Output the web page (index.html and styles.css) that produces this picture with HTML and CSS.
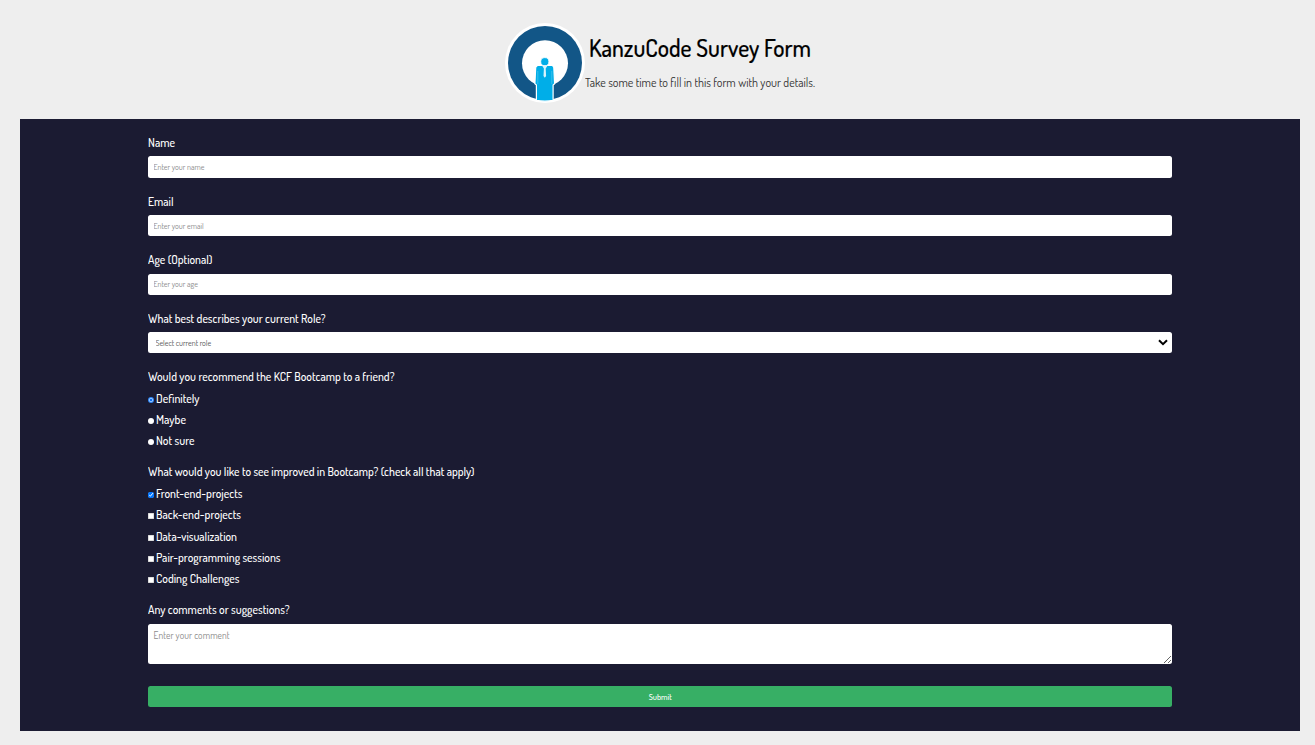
FILE: index.html
```html
<!DOCTYPE html>
<html lang="en">
<head>
<meta charset="utf-8">
<title>KanzuCode Survey Form</title>
<link rel="stylesheet" href="styles.css">
</head>
<body>
<header class="header">
  <svg class="logo" viewBox="0 0 80 80">
    <circle cx="40" cy="40" r="40" fill="#fff"/>
    <circle cx="40" cy="40" r="37" fill="#125687"/>
    <circle cx="40" cy="40.3" r="23" fill="#fff"/>
    <path d="M32.5 42.4h15l1.3 2 .8 16.3-1.5 1.3v15.4Q40 79 31.4 77.4V62l-1.5-1.3.8-16.3z" fill="#00aee8" stroke="#fff" stroke-width="1.2"/>
    <circle cx="39.8" cy="38.7" r="4.1" fill="#00aee8" stroke="#fff" stroke-width=".9"/>
    <path d="M36.8 42.3h6l-2.1 3.2.4 7.5-1.3 1.8-1.3-1.8.4-7.5z" fill="#d9f3fc"/>
    <path d="M32.8 48v13M46.8 48v13" stroke="#72d0ef" stroke-width=".5"/>
  </svg>
  <div class="titles">
    <h1 class="title"><span class="fit" data-width="222">KanzuCode Survey Form</span></h1>
    <p class="intro"><span class="fit" data-width="230">Take some time to fill in this form with your details.</span></p>
  </div>
</header>
<form class="survey">
  <div class="group">
    <label class="question" for="name"><span class="fit" data-width="27">Name</span></label>
    <input class="field" id="name" type="text" placeholder="Enter your name">
  </div>
  <div class="group">
    <label class="question" for="email"><span class="fit" data-width="25.5">Email</span></label>
    <input class="field" id="email" type="email" placeholder="Enter your email">
  </div>
  <div class="group">
    <label class="question" for="age"><span class="fit" data-width="64.5">Age (Optional)</span></label>
    <input class="field" id="age" type="text" placeholder="Enter your age">
  </div>
  <div class="group">
    <label class="question" for="role"><span class="fit" data-width="177.5">What best describes your current Role?</span></label>
    <div class="select-wrap">
      <select class="field select" id="role"><option>Select current role</option></select>
      <svg class="chevron" viewBox="0 0 10 7"><path d="M1 1.2l4 4 4-4" fill="none" stroke="#000" stroke-width="2"/></svg>
    </div>
  </div>
  <div class="choices">
    <p class="question"><span class="fit" data-width="246.5">Would you recommend the KCF Bootcamp to a friend?</span></p>
    <label class="option"><input class="tick round" type="radio" name="rec" checked><span class="fit" data-width="43.5">Definitely</span></label>
    <label class="option"><input class="tick round" type="radio" name="rec"><span class="fit" data-width="30">Maybe</span></label>
    <label class="option"><input class="tick round" type="radio" name="rec"><span class="fit" data-width="38.5">Not sure</span></label>
  </div>
  <div class="choices">
    <p class="question"><span class="fit" data-width="326.5">What would you like to see improved in Bootcamp? (check all that apply)</span></p>
    <label class="option"><input class="tick" type="checkbox" checked><span class="fit" data-width="86.5">Front-end-projects</span></label>
    <label class="option"><input class="tick square" type="checkbox"><span class="fit" data-width="85">Back-end-projects</span></label>
    <label class="option"><input class="tick square" type="checkbox"><span class="fit" data-width="81">Data-visualization</span></label>
    <label class="option"><input class="tick square" type="checkbox"><span class="fit" data-width="124.5">Pair-programming sessions</span></label>
    <label class="option"><input class="tick square" type="checkbox"><span class="fit" data-width="83.5">Coding Challenges</span></label>
  </div>
  <label class="question" for="comment"><span class="fit" data-width="141.5">Any comments or suggestions?</span></label>
  <textarea class="comment" id="comment" placeholder="Enter your comment"></textarea>
  <button class="submit" type="button"><span class="fit" data-width="23">Submit</span></button>
</form>
<script src="fit.js"></script>
</body>
</html>
```
FILE: styles.css
```css
* { box-sizing: border-box; }

body {
  margin: 0;
  background: #eee;
  font-family: Dosis, Roboto, sans-serif;
  font-size: 12px;
}

.header {
  display: flex;
  height: 119px;
  padding: 23px 0 0 505px;
}

.logo { width: 80px; height: 80px; }

.titles { width: 240px; }

.title {
  margin: 8px 0 0 4px;
  font-size: 25.6px;
  line-height: 32px;
  font-weight: 500;
  color: #000;
  -webkit-text-stroke: 0.2px #000;
}

.intro {
  margin: 12px 0 0;
  line-height: 16px;
  font-weight: 400;
  color: #333;
}

.fit {
  display: inline-block;
  white-space: nowrap;
  transform-origin: left center;
}

.survey {
  width: 1280px;
  height: 612px;
  margin-left: 20px;
  padding: 16px 128px 0;
  background: #1b1b32;
  color: #fff;
  font-weight: 500;
}

.group { height: 58.6px; }

.question {
  display: block;
  height: 16px;
  margin: 0;
  line-height: 16px;
}

.field {
  display: block;
  width: 100%;
  height: 21.3px;
  margin: 5.4px 0 0;
  padding: 0 5.5px 0;
  border: 0;
  border-radius: 2.5px;
  background: #fff;
  color: #777;
  font: 400 8px Dosis, Roboto, sans-serif;
  letter-spacing: 0;
}

.field::placeholder,
.comment::placeholder { color: #8a8a8a; }

.select-wrap { position: relative; }

.select {
  appearance: none;
  padding-left: 7.5px;
  color: #555;
}

.chevron {
  position: absolute;
  top: 7px;
  right: 4px;
  width: 10px;
  height: 7px;
}

.choices {
  margin-bottom: 12px;
}

.choices .question { margin-bottom: 2.7px; }

.choices + .choices .question { margin-bottom: 3.4px; }

.option {
  display: flex;
  align-items: center;
  height: 21.3px;
  line-height: 16px;
}

.tick {
  width: 6px;
  height: 6px;
  margin: 2px 2.4px 0 0;
}

.square,
.round {
  appearance: none;
  background: #fff;
  border: 0;
}

.square { box-shadow: inset 0 0 0 0.5px #bbb; }

.round { border-radius: 50%; }

.round:checked {
  background: radial-gradient(circle, #0d6ff0 0 1px, #8fc3ff 1.6px, #2b83f5 2.6px);
}

.comment {
  display: block;
  width: 100%;
  height: 40px;
  margin: 6px 0 22px;
  padding: 5.5px 5.5px;
  border: 0;
  border-radius: 2.5px;
  font: 400 9.5px/12px Dosis, Roboto, sans-serif;
  letter-spacing: 0.08px;
  resize: vertical;
}

.submit {
  display: flex;
  align-items: center;
  justify-content: center;
  width: 100%;
  height: 21.3px;
  padding: 1px 0 0;
  border: 0;
  border-radius: 2.5px;
  background: #37af65;
  color: #fff;
  font: 500 8px Dosis, Roboto, sans-serif;
}

.submit .fit { transform-origin: center; }
```
FILE: fit.js
```js
// Condense each label to its designed width.
document.querySelectorAll('.fit').forEach(function (el) {
  var natural = el.getBoundingClientRect().width;
  el.style.transform = 'scaleX(' + Number(el.dataset.width) / natural + ')';
});
```
